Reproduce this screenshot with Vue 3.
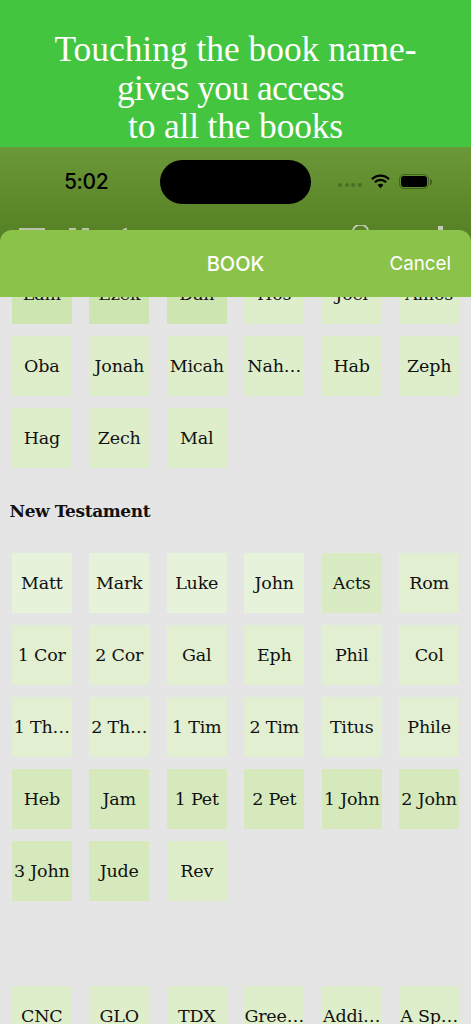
<script setup>
const sections = [
  {
    title: '',
    books: [
      ['Lam', 'c'], ['Ezek', 'c'], ['Dan', 'c'], ['Hos', 'b'], ['Joel', 'b'], ['Amos', 'b'],
      ['Oba', 'b'], ['Jonah', 'b'], ['Micah', 'b'], ['Nah…', 'b'], ['Hab', 'b'], ['Zeph', 'b'],
      ['Hag', 'b'], ['Zech', 'b'], ['Mal', 'b']
    ]
  },
  {
    title: 'New Testament',
    books: [
      ['Matt', 'a'], ['Mark', 'a'], ['Luke', 'a'], ['John', 'a'], ['Acts', 'd'], ['Rom', 'e'],
      ['1 Cor', 'e'], ['2 Cor', 'e'], ['Gal', 'e'], ['Eph', 'e'], ['Phil', 'e'], ['Col', 'e'],
      ['1 Th…', 'e'], ['2 Th…', 'e'], ['1 Tim', 'e'], ['2 Tim', 'e'], ['Titus', 'e'], ['Phile', 'e'],
      ['Heb', 'f'], ['Jam', 'f'], ['1 Pet', 'f'], ['2 Pet', 'f'], ['1 John', 'f'], ['2 John', 'f'],
      ['3 John', 'f'], ['Jude', 'f'], ['Rev', 'b']
    ]
  },
  {
    title: '\u00a0',
    books: [
      ['CNC', 'b'], ['GLO', 'b'], ['TDX', 'b'], ['Gree…', 'b'], ['Addi…', 'b'], ['A Sp…', 'b']
    ]
  }
]
</script>

<template>
  <div class="page">
    <div class="hero">
      <p>Touching the book name-</p>
      <p>gives you access</p>
      <p>to all the books</p>
    </div>

    <div class="device-top">
      <div class="status">
        <span class="time">5:02</span>
        <span class="island"></span>
        <div class="indicators">
          <span class="dots"><i></i><i></i><i></i><i></i></span>
          <svg class="wifi" width="19" height="15" viewBox="0 0 19 15">
            <path d="M1 5.2a12 12 0 0 1 17 0" fill="none" stroke="#000" stroke-width="2.2" />
            <path d="M3.8 8.2a8 8 0 0 1 11.4 0" fill="none" stroke="#000" stroke-width="2.2" />
            <path d="M6.6 11a4 4 0 0 1 5.8 0L9.5 14.2z" fill="#000" />
          </svg>
          <span class="battery"><b></b></span>
        </div>
      </div>
      <svg class="peek" width="471" height="5" viewBox="0 0 471 5">
        <path d="M19 4h26M69 4h7M82 4h7" stroke="#b9c2ab" stroke-width="2" fill="none" />
        <path d="M122 5l3-2h2v2z" fill="#b9c2ab" />
        <path d="M353 5a8 8 0 0 1 15 0" stroke="#c4cabb" stroke-width="2" fill="none" />
        <rect x="438" y="1" width="5" height="4" fill="#c4cabb" />
      </svg>
      <header class="sheet-head">
        <span class="sheet-title">BOOK</span>
        <span class="cancel">Cancel</span>
      </header>
    </div>

    <main class="list">
      <div class="list-inner">
        <section v-for="(s, i) in sections" :key="i">
          <h2 v-if="s.title" class="section-title">{{ s.title }}</h2>
          <div class="grid">
            <div v-for="b in s.books" :key="b[0]" class="cell" :class="'tone-' + b[1]">{{ b[0] }}</div>
          </div>
        </section>
      </div>
    </main>
  </div>
</template>

<style scoped>
.page {
  width: 471px;
  height: 1024px;
  overflow: hidden;
  display: flex;
  flex-direction: column;
  background: #e5e5e5;
}
.hero {
  height: 147px;
  flex: none;
  box-sizing: border-box;
  padding-top: 30px;
  background: #43c540;
  color: #fff;
  font-family: "Liberation Serif", serif;
  font-size: 35.4px;
  line-height: 38.5px;
  text-align: center;
}
.hero p {
  margin: 0;
}
.hero p:nth-child(2) {
  letter-spacing: -0.55px;
  padding-right: 10px;
}
.hero p:nth-child(3) {
  letter-spacing: -0.15px;
}
.device-top {
  flex: none;
  background: linear-gradient(#6b9838, #578225 84px);
}
.status {
  height: 78px;
  display: flex;
  align-items: center;
  position: relative;
}
.time {
  position: absolute;
  left: 64px;
  top: 23px;
  font: 500 21px/24px Inter, sans-serif;
  letter-spacing: -0.4px;
  color: #000;
}
.island {
  width: 151px;
  height: 44px;
  margin: 13px 0 0 160px;
  align-self: flex-start;
  border-radius: 22px;
  background: #000;
}
.indicators {
  position: absolute;
  left: 338px;
  top: 27px;
  display: flex;
  align-items: center;
}
.dots {
  display: flex;
  gap: 2.4px;
  margin-top: 7px;
}
.dots i {
  width: 4.2px;
  height: 4.2px;
  border-radius: 50%;
  background: #4a6f24;
}
.wifi {
  margin-left: 9px;
}
.battery {
  position: relative;
  width: 30px;
  height: 15px;
  margin-left: 9px;
  box-sizing: border-box;
  padding: 1px;
  border: 1px solid #41631d;
  border-radius: 5px;
}
.battery::after {
  content: "";
  position: absolute;
  right: -4px;
  top: 3.5px;
  width: 2px;
  height: 6px;
  border-radius: 0 2px 2px 0;
  background: #41631d;
}
.battery b {
  display: block;
  height: 100%;
  border-radius: 3px;
  background: #000;
}
.peek {
  display: block;
}
.sheet-head {
  height: 67px;
  position: relative;
  display: flex;
  align-items: center;
  justify-content: center;
  border-radius: 12px 12px 0 0;
  background: #8bc34a;
  color: #fff;
  font-family: Inter, sans-serif;
  font-size: 20px;
}
.sheet-title {
  font-weight: 500;
}
.cancel {
  position: absolute;
  right: 20px;
  font-weight: 400;
  font-size: 18.8px;
}
.list {
  flex: 1;
  overflow: hidden;
}
.list-inner {
  margin-top: -33px;
}
.section-title {
  height: 85px;
  margin: 0;
  padding-left: 9.5px;
  display: flex;
  align-items: center;
  font: 700 17px "DejaVu Serif", serif;
  letter-spacing: -0.4px;
  color: #111;
}
.grid {
  display: grid;
  grid-template-columns: repeat(6, 60px);
  justify-content: space-between;
  row-gap: 12px;
  padding: 0 11.8px;
}
.cell {
  height: 60px;
  display: flex;
  align-items: center;
  justify-content: center;
  white-space: nowrap;
  font-family: "DejaVu Serif", serif;
  font-size: 17.5px;
  letter-spacing: -0.2px;
  color: #111;
}
.tone-a { background: #e6f2d9; }
.tone-b { background: #dfeeca; }
.tone-c { background: #cde5b0; }
.tone-d { background: #d8ebc3; }
.tone-e { background: #e2efd1; }
.tone-f { background: #d5e9bc; }
</style>
